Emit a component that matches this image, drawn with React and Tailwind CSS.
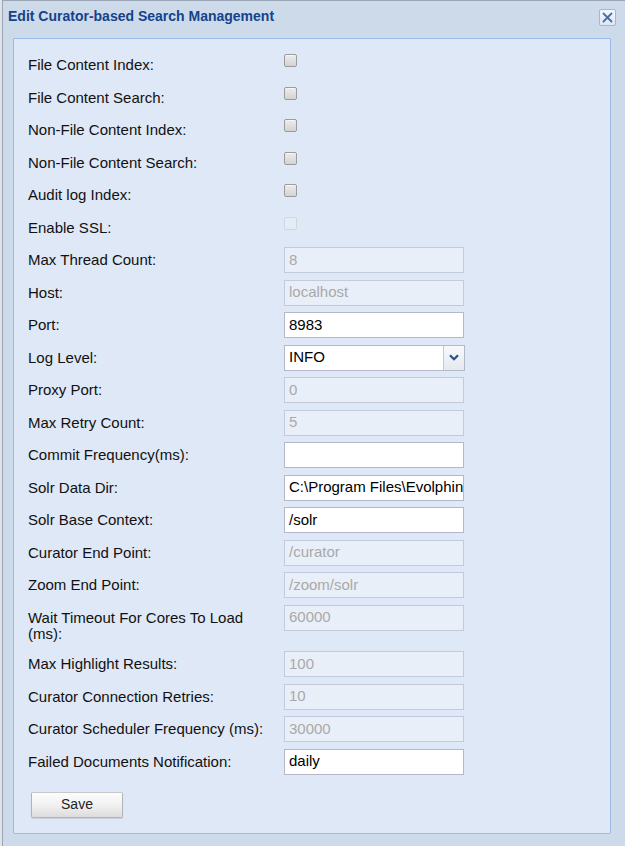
import React from "react";

const font = { fontFamily: '"Liberation Sans", Arial, sans-serif' };

function Checkbox({ disabled }) {
  return (
    <div
      className={
        "mt-[2px] w-[13px] h-[13px] rounded-[2px] border " +
        (disabled
          ? "border-[#cfd6e2] bg-[#e6ecf5]"
          : "border-[#9b9b9b] bg-gradient-to-b from-[#ececec] to-[#d3d3d3] shadow-[inset_0_1px_0_#f6f6f6]")
      }
    />
  );
}

function TextInput({ value, disabled }) {
  return (
    <div
      className={
        "w-[180px] h-[26px] border flex items-center pl-[4px] overflow-hidden whitespace-nowrap text-[15px] " +
        (disabled
          ? "border-[#c3cadb] bg-[#e9eff8] text-[#a9a9a9]"
          : "border-[#b5b8c8] bg-white text-black")
      }
    >
      {value}
    </div>
  );
}

function SelectInput({ value }) {
  return (
    <div className="w-[181px] h-[26px] border border-[#b5b8c8] bg-white flex text-[15px] text-black">
      <div className="flex-1 flex items-center pl-[4px]">{value}</div>
      <div className="w-[21px] h-full border-l border-[#c5c9d6] bg-gradient-to-b from-[#f7f9fc] to-[#e4e9f1] flex items-center justify-center">
        <svg width="10" height="7" viewBox="0 0 10 7">
          <path d="M1 1.2 L5 5.2 L9 1.2" fill="none" stroke="#2d4f86" strokeWidth="2.2" />
        </svg>
      </div>
    </div>
  );
}

function Row({ label, children, tall }) {
  return (
    <div className="flex items-start min-h-[26px] mb-[6.5px]">
      <div
        className={
          "w-[256px] pt-[5px] leading-[16px] text-[15px] text-[#111] pr-[14px] " +
          (tall ? "pb-[3px]" : "")
        }
      >
        {label}
      </div>
      <div>{children}</div>
    </div>
  );
}

export default function App() {
  const rows = [
    { label: "File Content Index:", type: "cb" },
    { label: "File Content Search:", type: "cb" },
    { label: "Non-File Content Index:", type: "cb" },
    { label: "Non-File Content Search:", type: "cb" },
    { label: "Audit log Index:", type: "cb" },
    { label: "Enable SSL:", type: "cb", disabled: true },
    { label: "Max Thread Count:", value: "8", disabled: true },
    { label: "Host:", value: "localhost", disabled: true },
    { label: "Port:", value: "8983" },
    { label: "Log Level:", type: "select", value: "INFO" },
    { label: "Proxy Port:", value: "0", disabled: true },
    { label: "Max Retry Count:", value: "5", disabled: true },
    { label: "Commit Frequency(ms):", value: "" },
    { label: "Solr Data Dir:", value: "C:\\Program Files\\Evolphin Software\\Zoom\\solr" },
    { label: "Solr Base Context:", value: "/solr" },
    { label: "Curator End Point:", value: "/curator", disabled: true },
    { label: "Zoom End Point:", value: "/zoom/solr", disabled: true },
    { label: "Wait Timeout For Cores To Load (ms):", value: "60000", disabled: true, tall: true },
    { label: "Max Highlight Results:", value: "100", disabled: true },
    { label: "Curator Connection Retries:", value: "10", disabled: true },
    { label: "Curator Scheduler Frequency (ms):", value: "30000", disabled: true },
    { label: "Failed Documents Notification:", value: "daily" },
  ];

  return (
    <div className="w-[625px] h-[846px] bg-[#dfe4ea] overflow-hidden" style={font}>
      <div className="ml-[2px] h-[846px] border-l border-t border-[#9aa6b6] bg-[#cddaea]">
        <div className="h-[30px] flex items-center justify-between pl-[5px] pr-[9px]">
          <div className="text-[14px] font-bold text-[#15428b]">
            Edit Curator-based Search Management
          </div>
          <div className="w-[17px] h-[17px] mt-[3px] border border-[#9fb7dd] rounded-[2px] bg-gradient-to-b from-[#f4f8fd] to-[#dde7f4] flex items-center justify-center">
            <svg width="11" height="11" viewBox="0 0 11 11">
              <path d="M1.5 1.5 L9.5 9.5 M9.5 1.5 L1.5 9.5" stroke="#4a6ca8" strokeWidth="1.8" strokeLinecap="round" />
            </svg>
          </div>
        </div>
        <div className="ml-[10px] mt-[7px] w-[598px] h-[796px] border border-[#99bbe8] bg-[#dfe8f6] pt-[13px] pl-[14px] rounded-b-[2px]">
          {rows.map((r, i) => (
            <Row key={i} label={r.label} tall={r.tall}>
              {r.type === "cb" ? (
                <Checkbox disabled={r.disabled} />
              ) : r.type === "select" ? (
                <SelectInput value={r.value} />
              ) : (
                <TextInput value={r.value} disabled={r.disabled} />
              )}
            </Row>
          ))}
          <div className="mt-[17px] ml-[3px] w-[92px] h-[26px] border border-[#b4b4b4] border-t-[#c8c8c8] rounded-[2px] bg-gradient-to-b from-[#fdfdfd] via-[#f1f1f1] to-[#dcdcdc] flex items-center justify-center text-[14px] text-[#222] shadow-[0_1px_1px_rgba(0,0,0,0.1)]">
            Save
          </div>
        </div>
      </div>
    </div>
  );
}
